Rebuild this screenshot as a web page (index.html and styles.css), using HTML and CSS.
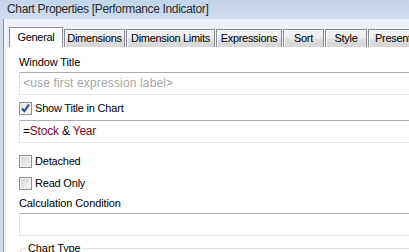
FILE: index.html
```html
<!DOCTYPE html>
<html lang="en">
<head>
  <meta charset="UTF-8" />
  <title>Chart Properties</title>
  <link rel="stylesheet" href="styles.css">
</head>
<body>
  <div class="window">
    <div class="titlebar">Chart Properties [Performance Indicator]</div>

    <div class="frame">
      <div class="tabs">
        <div class="tab tab-general active">General</div>
        <div class="tab tab-dim">Dimensions</div>
        <div class="tab tab-limits">Dimension Limits</div>
        <div class="tab tab-expr">Expressions</div>
        <div class="tab tab-sort">Sort</div>
        <div class="tab tab-style">Style</div>
        <div class="tab tab-present">Presentation</div>
      </div>

      <div class="page">
        <div class="label first">Window Title</div>
        <div class="field placeholder">&lt;use first expression label&gt;</div>

        <label class="check-row row-show">
          <span class="box checked">
            <svg width="11" height="11" viewBox="0 0 11 11"><path d="M2 5.5 L4.3 8.2 L9 1.6" fill="none" stroke="#2f4a8a" stroke-width="2"/></svg>
          </span>
          Show Title in Chart
        </label>
        <div class="field expr">=<span class="fn">Stock</span> &amp; <span class="fn">Year</span></div>

        <label class="check-row row-detached"><span class="box"></span>Detached</label>
        <label class="check-row row-readonly"><span class="box"></span>Read Only</label>

        <div class="label calc">Calculation Condition</div>
        <div class="field"></div>

        <fieldset class="group">
          <legend>Chart Type</legend>
        </fieldset>
      </div>
    </div>
  </div>
</body>
</html>
```

FILE: styles.css
```css
html, body {
  margin: 0; padding: 0; height: 100%; overflow: hidden;
  font-family: "Liberation Sans", Arial, sans-serif;
}

.window {
  width: 460px; height: 100%;
  background: #cfdbea;
  display: flex; flex-direction: column;
}

.titlebar {
  height: 19px; line-height: 19px;
  padding-left: 7px;
  font-size: 12px; letter-spacing: -0.35px; color: #2b2b2b;
  background: linear-gradient(#c3d5ea, #cfdcee);
  white-space: nowrap;
}

.frame {
  flex: 1;
  margin-left: 3px; padding-left: 2px;
  border-left: 1px solid #8d96a1;
  background: #eef1f5;
  display: flex; flex-direction: column;
}

/* tab strip */
.tabs {
  display: flex; align-items: flex-end; gap: 1px;
  padding: 8px 0 0 3px;
  height: 20px;
}

.tab {
  box-sizing: border-box; height: 18px;
  padding-top: 1px; line-height: 15px;
  border: 1px solid #898c95; border-bottom: none;
  background: linear-gradient(#f4f4f4 0%, #ececec 45%, #dedede 55%, #d6d6d6 100%);
  box-shadow: inset 1px 1px 0 #fbfbfb;
  font-size: 11px; letter-spacing: -0.3px; color: #000;
  text-align: center; white-space: nowrap; overflow: hidden;
}

.tab.active {
  height: 20px; padding-top: 2px;
  background: #fff; box-shadow: none;
  position: relative; z-index: 1;
}

.tab-general { width: 54px; }
.tab-dim     { width: 61px; }
.tab-limits  { width: 89px; }
.tab-expr    { width: 66px; }
.tab-sort    { width: 41px; }
.tab-style   { width: 42px; }
.tab-present { width: 80px; text-align: left; padding-left: 6px; }

/* page */
.page {
  flex: 1;
  background: #fff;
  padding-left: 13px;
  display: flex; flex-direction: column; align-items: flex-start;
}

.label {
  font-size: 11px; line-height: 13px; letter-spacing: -0.1px; color: #000;
}
.label.first { margin-top: 9px; }
.label.calc  { margin-top: 7px; }

.field {
  box-sizing: border-box; width: 420px; height: 23px;
  margin-top: 3px; padding-left: 3px;
  border: 1px solid #e2e3ea; border-top-color: #abadb3; border-bottom-color: #e3e9ef;
  font-size: 12px; line-height: 21px; color: #000; white-space: nowrap;
}
.field.placeholder { color: #a6a6a6; letter-spacing: 0.15px; }
.field.expr { margin-top: 5px; letter-spacing: -0.2px; }
.field.expr .fn { color: #7d0a1e; }

.check-row {
  display: flex; align-items: center; gap: 3px;
  font-size: 11px; line-height: 13px; letter-spacing: -0.2px; color: #000;
}
.row-show     { margin-top: 7px; }
.row-detached { margin-top: 12px; }
.row-readonly { margin-top: 9px; }

.box {
  box-sizing: border-box; width: 13px; height: 13px;
  border: 1px solid #8e8f8f;
  background: linear-gradient(135deg, #d4d4d4, #f6f6f6);
  box-shadow: inset 0 0 0 1px #f2f2f2;
  display: flex; align-items: center; justify-content: center;
}
.box.checked { background: linear-gradient(135deg, #e2e2e2, #fbfbfb); }

.group {
  box-sizing: border-box; width: 420px; height: 40px;
  margin: 6px 0 0 1px; padding: 0;
  border: 1px solid #d5dfe5; border-radius: 3px;
}
.group legend {
  margin-left: 5px; padding: 0 2px;
  font-size: 11px; line-height: 13px; letter-spacing: -0.1px; color: #000;
}
```
